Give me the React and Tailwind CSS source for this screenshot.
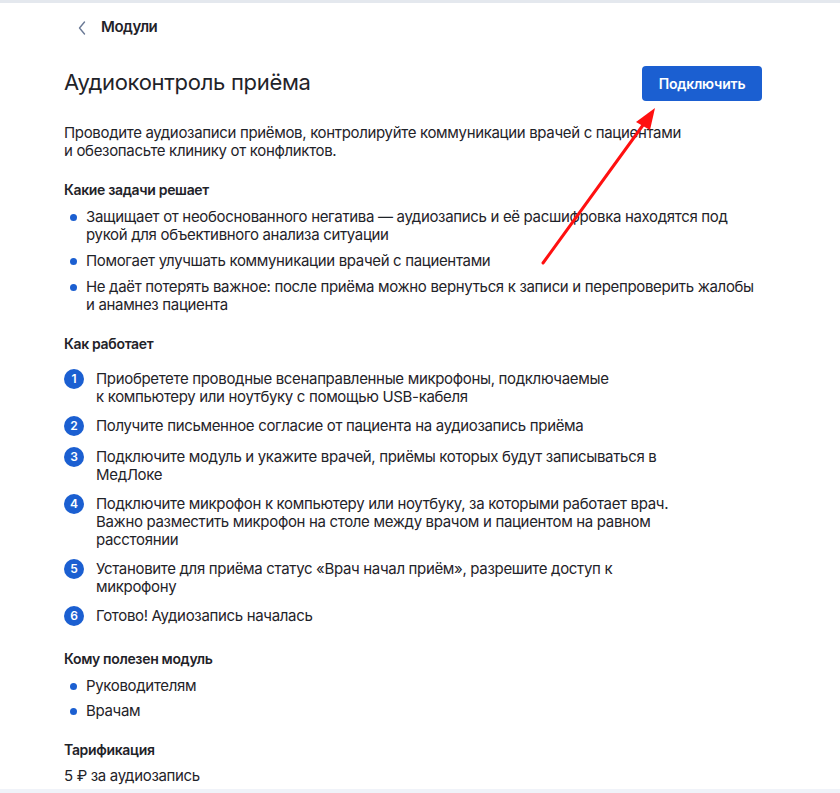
import React from "react";

const Dot = () => (
  <span className="mt-[6px] h-[7px] w-[7px] shrink-0 rounded-full bg-[#1b5fd1]" />
);

const Bullet = ({ children }) => (
  <li className="flex gap-[9px] pl-[6px]">
    <Dot />
    <span>{children}</span>
  </li>
);

const Step = ({ n, children }) => (
  <li className="flex min-h-[21px] gap-[12px]">
    <span className="flex h-[20px] w-[20px] shrink-0 items-center justify-center rounded-full bg-[#1b5fd1] text-[12px] font-semibold leading-none tracking-normal text-white">
      {n}
    </span>
    <span className="pt-[1px]">{children}</span>
  </li>
);

export default function App() {
  return (
    <div
      className="relative flex h-[793px] w-[840px] flex-col overflow-hidden bg-white text-[#1f2329]"
      style={{ fontFamily: "Inter, 'Noto Sans', sans-serif" }}
    >
      <div className="h-[3px] shrink-0 bg-[#e4e8ee]" />
      <div className="flex-1 overflow-hidden px-[64px]">
        <div className="flex h-[49px] items-center gap-[14px] pl-[13px]">
          <svg width="10" height="16" viewBox="0 0 10 16" fill="none">
            <path d="M7.5 2 L2.5 8 L7.5 14" stroke="#6b7a96" strokeWidth="1.4" strokeLinecap="round" strokeLinejoin="round" />
          </svg>
          <span className="text-[15px] font-semibold tracking-[-0.45px]">Модули</span>
        </div>
        <div className="mt-[14px] flex w-[698px] items-center justify-between">
          <h1 className="pb-[4px] text-[22px] font-normal leading-[28px] tracking-[-0.3px] text-[#1f2329]">
            Аудиоконтроль приёма
          </h1>
          <button className="h-[35px] w-[120px] rounded-[4px] bg-[#1b5fd1] text-[14px] font-semibold tracking-[-0.2px] text-white">
            Подключить
          </button>
        </div>
        <div className="w-[698px] text-[15px] leading-[18px] tracking-[-0.33px]">
          <p className="mt-[23px]">
            Проводите аудиозаписи приёмов, контролируйте коммуникации врачей с пациентами
            <br />и обезопасьте клинику от конфликтов.
          </p>

          <h2 className="mt-[21px] text-[14px] font-semibold tracking-[-0.33px]">Какие задачи решает</h2>
          <ul className="mt-[9px] flex flex-col gap-[8px]">
            <Bullet>
              Защищает от необоснованного негатива — аудиозапись и её расшифровка находятся под
              <br />рукой для объективного анализа ситуации
            </Bullet>
            <Bullet>Помогает улучшать коммуникации врачей с пациентами</Bullet>
            <Bullet>
              Не даёт потерять важное: после приёма можно вернуться к записи и перепроверить жалобы
              <br />и анамнез пациента
            </Bullet>
          </ul>

          <h2 className="mt-[21px] text-[14px] font-semibold tracking-[-0.33px]">Как работает</h2>
          <ol className="mt-[16px] flex flex-col gap-[10px]">
            <Step n="1">
              Приобретете проводные всенаправленные микрофоны, подключаемые
              <br />к компьютеру или ноутбуку с помощью USB-кабеля
            </Step>
            <Step n="2">Получите письменное согласие от пациента на аудиозапись приёма</Step>
            <Step n="3">
              Подключите модуль и укажите врачей, приёмы которых будут записываться в
              <br />МедЛоке
            </Step>
            <Step n="4">
              Подключите микрофон к компьютеру или ноутбуку, за которыми работает врач.
              <br />Важно разместить микрофон на столе между врачом и пациентом на равном
              <br />расстоянии
            </Step>
            <Step n="5">
              Установите для приёма статус «Врач начал приём», разрешите доступ к
              <br />микрофону
            </Step>
            <Step n="6">Готово! Аудиозапись началась</Step>
          </ol>

          <h2 className="mt-[23px] text-[14px] font-semibold tracking-[-0.33px]">Кому полезен модуль</h2>
          <ul className="mt-[9px] flex flex-col gap-[7px]">
            <Bullet>Руководителям</Bullet>
            <Bullet>Врачам</Bullet>
          </ul>

          <h2 className="mt-[21px] text-[14px] font-semibold tracking-[-0.33px]">Тарификация</h2>
          <p className="mt-[8px]">5 ₽ за аудиозапись</p>
        </div>
      </div>
      <div className="h-[4px] shrink-0 bg-[#f0f3f9]" />

      <svg
        className="pointer-events-none absolute left-0 top-0"
        width="840"
        height="793"
        viewBox="0 0 840 793"
      >
        <line x1="543" y1="263" x2="646" y2="121" stroke="#ff1010" strokeWidth="3" strokeLinecap="round" />
        <polygon points="655,108 636,122 650,130" fill="#ff1010" />
      </svg>
    </div>
  );
}
